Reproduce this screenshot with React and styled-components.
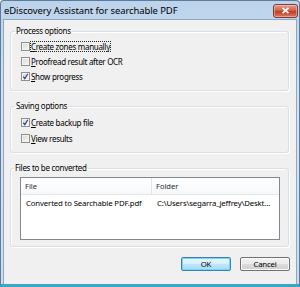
import React from "react";
import styled, { createGlobalStyle } from "styled-components";

const Global = createGlobalStyle`
  html, body { margin: 0; padding: 0; background: #fff; }
  body { font-family: "Noto Sans", "Open Sans", sans-serif; }
`;

const Window = styled.div`
  width: 300px;
  height: 287px;
  box-sizing: border-box;
  border: 1px solid #5f7b97;
  border-bottom: 3px solid #3aa6c8;
  border-radius: 4px 4px 0 0;
  background: linear-gradient(#bcd3ec, #d6e5f5 40%, #c9dcf1);
  display: flex;
  flex-direction: column;
`;

const TitleBar = styled.div`
  height: 18px;
  flex: none;
  display: flex;
  align-items: center;
  justify-content: space-between;
  padding: 0 1px 0 3px;
`;

const Title = styled.span`
  font-size: 9.5px;
  color: #000;
  letter-spacing: -0.1px;
`;

const CloseBtn = styled.div`
  width: 23px;
  height: 12px;
  margin-top: 1px;
  border: 1px solid #7d3a32;
  border-radius: 3px;
  background: linear-gradient(#e5a08f, #d0614d 45%, #c23e27 55%, #d67a5c);
  display: flex;
  align-items: center;
  justify-content: center;
  box-shadow: inset 0 0 0 1px rgba(255, 255, 255, 0.35);
`;

const Client = styled.div`
  flex: 1;
  margin: 0 2px;
  border: 1px solid #8ea6bf;
  border-bottom: none;
  background: #f0f0f0;
  padding: 6px 7px 0 6px;
  display: flex;
  flex-direction: column;
`;

const Group = styled.fieldset`
  margin: ${(p) => p.$mt || "0"} 0 0 0;
  padding: ${(p) => p.$pad};
  border: 1px solid #d5dfe5;
  border-radius: 3px;
  box-shadow: inset 1px 1px 0 #fff, 1px 1px 0 #fff;
  display: flex;
  flex-direction: column;
  gap: ${(p) => p.$gap || "4px"};
  min-width: 0;
`;

const Legend = styled.legend`
  font-size: 8px;
  color: #000;
  padding: 0 1px;
  margin-left: -6px;
  line-height: 10px;
  letter-spacing: -0.3px;
`;

const CheckRow = styled.div`
  display: flex;
  align-items: center;
  height: 11px;
`;

const Box = styled.span`
  width: 9px;
  height: 9px;
  box-sizing: border-box;
  border: 1px solid #8e8f8f;
  background: linear-gradient(135deg, #d8d8d8, #f7f7f7);
  box-shadow: inset 0 0 0 1px #f4f4f4;
  position: relative;
  flex: none;
`;

const Label = styled.span`
  font-size: 8px;
  color: #000;
  line-height: 11px;
  padding: 0 1px;
  letter-spacing: -0.3px;
  outline: ${(p) => (p.$focus ? "1px dotted #222" : "none")};
  outline-offset: -1px;
`;

const Mnemonic = styled.span`
  text-decoration: underline;
`;

const Check = ({ label, m, checked, focus }) => (
  <CheckRow>
    <Box>
      {checked && (
        <svg width="9" height="9" viewBox="0 0 9 9" style={{ position: "absolute", left: -1, top: -1 }}>
          <path d="M2.3 4.6 L3.8 6.6 L6.8 1.8" stroke="#2a3e8c" strokeWidth="1.2" fill="none" />
        </svg>
      )}
    </Box>
    <Label $focus={focus}>
      <Mnemonic>{m}</Mnemonic>
      {label}
    </Label>
  </CheckRow>
);

const List = styled.div`
  height: 63px;
  box-sizing: border-box;
  border: 1px solid #828790;
  background: #fff;
  display: flex;
  flex-direction: column;
`;

const HeaderRow = styled.div`
  display: grid;
  grid-template-columns: 131px 1fr;
  height: 16px;
  flex: none;
  border-bottom: 1px solid #e3e8ef;
  background: linear-gradient(#fff, #f7f8fa);
`;

const HeadCell = styled.div`
  font-size: 7.5px;
  line-height: 16px;
  padding-left: 4px;
  color: #1e2a3b;
  border-right: ${(p) => (p.$sep ? "1px solid #e2e4e7" : "none")};
`;

const DataRow = styled.div`
  display: grid;
  grid-template-columns: 131px 1fr;
  height: 16px;
`;

const Cell = styled.div`
  font-size: 7.8px;
  line-height: 16px;
  padding-left: 5px;
  letter-spacing: -0.15px;
  white-space: nowrap;
  overflow: hidden;
  color: #000;
`;

const Buttons = styled.div`
  display: flex;
  justify-content: flex-end;
  gap: 9px;
  margin-top: 10px;
  margin-right: -1px;
`;

const Button = styled.div`
  width: 50px;
  height: 14px;
  box-sizing: border-box;
  border: 1px solid ${(p) => (p.$default ? "#3c7fb1" : "#707070")};
  border-radius: 2px;
  background: ${(p) =>
    p.$default
      ? "linear-gradient(#eaf6fd, #d9f0fc 50%, #bee6fd 50%, #a7d9f5)"
      : "linear-gradient(#f2f2f2, #ebebeb 50%, #dddddd 50%, #cfcfcf)"};
  box-shadow: inset 0 0 0 1px ${(p) => (p.$default ? "#6fd7ff" : "#fcfcfc")};
  font-size: 7.8px;
  line-height: 12px;
  letter-spacing: -0.2px;
  text-align: center;
  color: #000;
`;

export default function App() {
  return (
    <>
      <Global />
      <Window>
        <TitleBar>
          <Title>eDiscovery Assistant for searchable PDF</Title>
          <CloseBtn>
            <svg width="9" height="7" viewBox="0 0 9 7">
              <path d="M1.5 0.8 L7.5 6.2 M7.5 0.8 L1.5 6.2" stroke="#fff" strokeWidth="1.8" />
            </svg>
          </CloseBtn>
        </TitleBar>
        <Client>
          <Group $pad="5px 8px 8px 10px" $gap="4px">
            <Legend>Process options</Legend>
            <Check m="C" label="reate zones manually" focus />
            <Check m="P" label="roofread result after OCR" />
            <Check m="S" label="how progress" checked />
          </Group>
          <Group $mt="10px" $pad="6px 8px 8px 10px" $gap="5px">
            <Legend>Saving options</Legend>
            <Check m="C" label="reate backup file" checked />
            <Check m="V" label="iew results" />
          </Group>
          <Group $mt="10px" $pad="4px 8px 6px 9px">
            <Legend>Files to be converted</Legend>
            <List>
              <HeaderRow>
                <HeadCell $sep>File</HeadCell>
                <HeadCell>Folder</HeadCell>
              </HeaderRow>
              <DataRow>
                <Cell>Converted to Searchable PDF.pdf</Cell>
                <Cell>C:\Users\segarra_jeffrey\Deskt...</Cell>
              </DataRow>
            </List>
          </Group>
          <Buttons>
            <Button $default>OK</Button>
            <Button>Cancel</Button>
          </Buttons>
        </Client>
      </Window>
    </>
  );
}
